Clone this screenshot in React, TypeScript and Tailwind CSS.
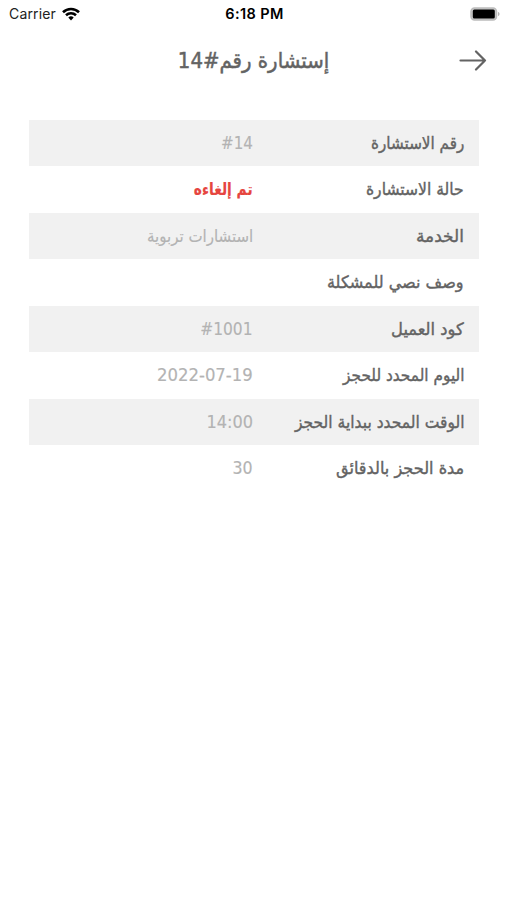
import clsx from "clsx"

type Detail = {
  label: string
  labelClass: string
  value?: string
  valueClass?: string
}

const details: Detail[] = [
  { label: "رقم الاستشارة", labelClass: "scale-x-[0.894]", value: "#14", valueClass: "scale-x-[0.89] text-[#b3b3b3]" },
  { label: "حالة الاستشارة", labelClass: "scale-x-[0.916]", value: "تم إلغاءه", valueClass: "scale-x-[0.81] text-[#e6453f] font-bold" },
  { label: "الخدمة", labelClass: "scale-x-100", value: "استشارات تربوية", valueClass: "scale-x-[0.883] text-[#b3b3b3]" },
  { label: "وصف نصي للمشكلة", labelClass: "scale-x-[0.945]" },
  { label: "كود العميل", labelClass: "scale-x-[0.96]", value: "#1001", valueClass: "scale-x-[0.91] text-[#b3b3b3]" },
  { label: "اليوم المحدد للحجز", labelClass: "scale-x-[0.903]", value: "2022-07-19", valueClass: "scale-x-[0.97] text-[#b3b3b3]" },
  { label: "الوقت المحدد ببداية الحجز", labelClass: "scale-x-[0.914]", value: "14:00", valueClass: "scale-x-[0.95] text-[#b3b3b3]" },
  { label: "مدة الحجز بالدقائق", labelClass: "scale-x-[0.948]", value: "30", valueClass: "scale-x-[0.93] text-[#b3b3b3]" },
]

function StatusBar() {
  return (
    <div className="grid h-7 grid-cols-3 items-center pl-[9px] pr-[7px] font-['Inter',sans-serif] text-black">
      <div className="flex items-center gap-[6px]">
        <span className="text-[14px] leading-none tracking-[0.15px] text-[#222]">Carrier</span>
        <svg width="18" height="14" viewBox="0 0 18 14" fill="none" stroke="currentColor" strokeWidth="2.6">
          <path d="M1 5.2a11.600 11.600 0 0 1 16 0" />
          <path d="M4 8.300a7.300 7.300 0 0 1 10 0" />
          <path d="M6.300 10.600a3.900 3.900 0 0 1 5.400 0L9 13.400z" fill="currentColor" stroke="none" />
        </svg>
      </div>
      <span className="text-center text-[14.5px] font-semibold leading-none tracking-[0.4px]">6:18 PM</span>
      <svg className="justify-self-end" width="30" height="14" viewBox="0 0 30 14">
        <rect x="1" y="1" width="25.5" height="12" rx="3.5" fill="#c9c9c9" stroke="#bcbcbc" strokeWidth="1.500" />
        <rect x="2.800" y="2.500" width="22" height="9" rx="1.500" fill="#000" />
        <path d="M28 5v4c1-.3 1.500-1.100 1.500-2s-.5-1.700-1.500-2z" fill="#b5b5b5" />
      </svg>
    </div>
  )
}

function Header() {
  return (
    <header className="grid h-[66px] grid-cols-[48px_1fr_48px] items-center px-5">
      <span />
      <h1 dir="rtl" className="text-center text-[21.5px] leading-none text-[#636363] [-webkit-text-stroke:0.5px]">
        <span className="inline-block scale-x-[0.917] whitespace-nowrap">إستشارة رقم#14</span>
      </h1>
      <button type="button" aria-label="رجوع" className="justify-self-end text-[#636363]">
        <svg width="28" height="22" viewBox="0 0 28 22" fill="none" stroke="currentColor" strokeWidth="2.200" strokeLinecap="round" strokeLinejoin="round">
          <path d="M1.500 10.500h24.500M17 1.500L26 10.500l-9 9" />
        </svg>
      </button>
    </header>
  )
}

export default function App() {
  return (
    <main className="min-h-[900px] w-full bg-white font-['DejaVu_Sans',sans-serif]">
      <StatusBar />
      <Header />
      <dl dir="rtl" className="mr-[28.5px] ml-[29px] mt-[26px] text-[17px] leading-none">
        {details.map((item, index) => (
          <div key={item.label} className="h-[46.5px]">
            <div
              className={clsx("grid h-[46px] grid-cols-[211px_1fr] items-center pr-[14.5px]", index % 2 === 0 && "bg-[#f1f1f1]")}
            >
              <dt className="text-[#636363] [-webkit-text-stroke:0.4px]">
                <span className={clsx("inline-block origin-right whitespace-nowrap", item.labelClass)}>{item.label}</span>
              </dt>
              <dd className="[-webkit-text-stroke:0.15px]">
                {item.value && (
                  <span dir="auto" className={clsx("inline-block origin-right whitespace-nowrap", item.valueClass)}>
                    {item.value}
                  </span>
                )}
              </dd>
            </div>
          </div>
        ))}
      </dl>
    </main>
  )
}
